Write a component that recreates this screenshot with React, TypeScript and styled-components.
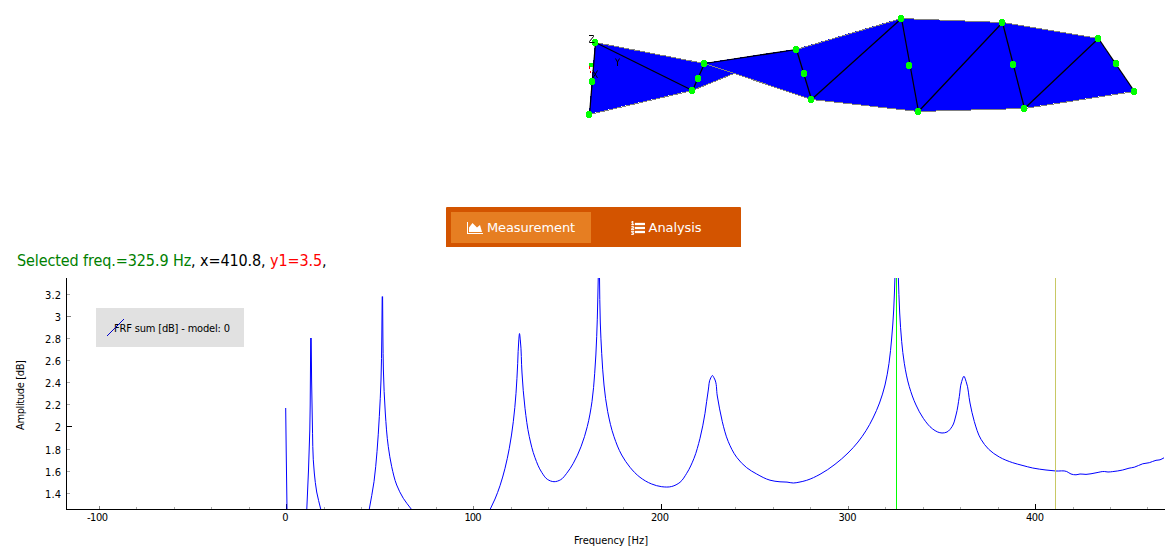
import React from 'react';
import styled, { createGlobalStyle } from 'styled-components';

const GlobalStyle = createGlobalStyle`
  body { margin: 0; background: #fff; overflow: hidden; }
`;

const UI_FONT = "'DejaVu Sans Condensed', 'DejaVu Sans', sans-serif";

const Page = styled.main`
  display: flex;
  flex-direction: column;
  width: 1166px;
  height: 557px;
  background: #fff;
  color: #000;
  font-family: ${UI_FONT};
  font-stretch: condensed;
`;

const ModelView = styled.svg`
  display: block;
  flex: none;
  width: 1166px;
  height: 207px;
`;

const TabBar = styled.nav`
  display: flex;
  flex: none;
  box-sizing: border-box;
  width: 295px;
  height: 40px;
  margin-left: 446px;
  padding: 5px 5px 4px;
  gap: 5px;
  border-radius: 1px 1px 0 0;
  background: #d35400;
`;

const Tab = styled.button<{ $active?: boolean }>`
  display: flex;
  flex: 1;
  align-items: center;
  justify-content: center;
  gap: 4px;
  padding: 0;
  border: 0;
  background: ${(p) => (p.$active ? '#e67e22' : 'transparent')};
  color: #fff;
  font: 13px/16px 'DejaVu Sans', sans-serif;
  letter-spacing: -0.1px;
`;

const TabIcon = styled.svg<{ $width: number }>`
  flex: none;
  width: ${(p) => p.$width}px;
  height: 14px;
  fill: currentColor;
`;

const Readout = styled.div`
  flex: none;
  height: 31px;
  padding-left: 17px;
  font-size: 16px;
  line-height: 27px;
  letter-spacing: -0.1px;
  white-space: pre;
`;

const Value = styled.span<{ $color: string }>`
  color: ${(p) => p.$color};
`;

const Plot = styled.svg`
  display: block;
  flex: none;
  width: 1166px;
  height: 279px;
  font-family: ${UI_FONT};
  font-stretch: condensed;
  font-size: 11px;
`;

type Pt = [number, number];

const nodes: Record<string, Pt> = {
  a: [595, 42], b: [589, 114], c: [704, 63], d: [692, 90],
  e: [796, 49], f: [811, 99], g: [901, 18], h: [918, 111],
  i: [1002, 22], j: [1024, 108], k: [1098, 38], l: [1134, 91],
};
const midNodes: Pt[] = [[592, 81], [698, 78], [804, 73], [909, 65], [1013, 64], [1116, 63]];
const darkEdges = ['ab', 'ad', 'dc', 'ce', 'ef', 'fg', 'gh', 'hi', 'ij', 'jk', 'kl'];
const greyEdges = ['ac', 'bd', 'cf', 'eg', 'gi', 'ik', 'lj', 'jh', 'hf'];

const Edge = ({ id, color, width = 1 }: { id: string; color: string; width?: number }) => {
  const [p, q] = [nodes[id[0]], nodes[id[1]]];
  return (
    <line x1={p[0] + 0.5} y1={p[1] + 0.5} x2={q[0] + 0.5} y2={q[1] + 0.5} stroke={color} strokeWidth={width} />
  );
};

const Model = () => (
  <ModelView viewBox="0 0 1166 207">
    <g shapeRendering="crispEdges">
      <path
        fill="#00f"
        d="M595 42L704 63L796 49L901 18L1002 22L1098 38L1134 91L1024 108L918 111L811 99L734 73.5L692 90L589 114Z"
      />
      {greyEdges.map((id) => <Edge key={id} id={id} color="#808080" />)}
      <line x1="692.5" y1="90.5" x2="734" y2="73.5" stroke="#808080" />
    </g>
    {darkEdges.map((id) => <Edge key={id} id={id} color="#000" width={1.25} />)}
    <g shapeRendering="crispEdges">
      {[...Object.values(nodes), ...midNodes].map(([x, y]) => (
        <path key={`${x}-${y}`} fill="#0f0" d={`M${x - 3} ${y - 2}h1v-1h4v1h1v5h-1v1h-4v-1h-1z`} />
      ))}
      <rect x="589" y="63" width="4" height="4" fill="#0f0" />
      <path stroke="red" d="M589.5 66v3M590.5 71v2" />
    </g>
    <path
      stroke="#000"
      fill="none"
      d="M589 35.5h4.5v1L589.5 41.5v1h5M593 70.5L597.5 78M597.5 70.5L593 78M615.5 58.5L617.5 62V66M619.5 58.5L617.5 62"
    />
  </ModelView>
);

const response: Pt[][] = [
  [[285.7, 408], [286.2, 450], [287, 509]],
  [[306.8, 509], [308.5, 470], [309.8, 430], [310.4, 380], [310.7, 338]],
  [[311.2, 338], [311.6, 380], [312.3, 420], [314.3, 473], [316.7, 492], [320.7, 509]],
  [[369.3, 509], [374, 481.7], [377, 451.7], [379.3, 416.7], [381, 380], [381.8, 337], [382.2, 296.5]],
  [[382.6, 296.5], [382.9, 337], [383.4, 370], [385.3, 413], [388.3, 446.7], [391.7, 466.7], [396.7, 485], [403.3, 498.3], [411.2, 509]],
  [[490.3, 509], [495, 499], [500, 485.7], [505, 468.3], [509.3, 448.3], [513.3, 421.7], [516, 393.3], [517.7, 363.3], [518.8, 340], [519.5, 333.5], [520.3, 340], [522, 373], [525, 408.3], [529.3, 436.7], [535, 457.7], [541.7, 472.3], [547.3, 479.3], [554, 481.7], [560.7, 479.7], [566.7, 473.3], [573.3, 463.3], [581, 446.7], [587.3, 426.5], [592, 401.5], [594.7, 373.3], [596.7, 336.7], [597.7, 303], [598.3, 276]],
  [[599.5, 276], [600.3, 323], [601.7, 353.3], [604, 385], [607.7, 411.7], [614, 436.7], [621.7, 455], [630, 467.3], [640, 477.3], [651.7, 484], [661.7, 486.7], [671.7, 486.5], [680, 482.3], [686.7, 473.3], [694, 458.3], [700, 438.3], [705, 413.3], [708.3, 390], [710.7, 378], [712.4, 375.5], [714.1, 378], [717.3, 396], [722.3, 421.7], [728.3, 441.7], [736.7, 457.3], [746.7, 467.7], [756.7, 474], [770, 480.2], [780, 481.8], [787, 482.1], [793.3, 483], [799, 482.2], [806.7, 480.3], [820, 474.3], [835, 464.3], [848, 453], [858, 442], [866, 430.7], [873, 418], [879.5, 403], [885, 385], [889, 363.3], [891.7, 338], [893.7, 310], [895, 276]],
  [[898.3, 276], [899.7, 313], [901.7, 341.7], [904.3, 363.3], [909.3, 386.7], [916, 405], [923.3, 418.3], [932.7, 429], [937.7, 432], [942, 433], [947, 432], [952, 426.7], [956, 415], [959.3, 396.7], [961.7, 381.5], [963.9, 376.2], [966.1, 381.5], [970, 403], [974.3, 421.5], [981, 439.3], [988.7, 449.3], [999.3, 457], [1012.7, 462.7], [1022, 465.3], [1032.7, 468], [1046, 470], [1056, 471], [1066.7, 471.5], [1071, 474], [1076, 474.8], [1080, 474], [1086, 474.4], [1096, 472.8], [1104.3, 471.5], [1108, 472], [1112.7, 471.6], [1122.7, 470], [1129, 468.2], [1134.3, 467.2], [1142.7, 463.8], [1149.3, 462.7], [1156, 460.3], [1160, 459.8], [1164, 457.8]],
];

const dist = (a: Pt, b: Pt) => Math.hypot(b[0] - a[0], b[1] - a[1]);

// Derivative at b of the parabola through a, b and c, parametrised by chord length.
const tangent = (a: Pt, b: Pt, c: Pt): Pt => {
  const [s, t] = [dist(a, b), dist(b, c)];
  if (s === 0 || t === 0) return [(c[0] - a[0]) / (s + t), (c[1] - a[1]) / (s + t)];
  const axis = (k: 0 | 1) => ((t * (b[k] - a[k])) / s + (s * (c[k] - b[k])) / t) / (s + t);
  return [axis(0), axis(1)];
};

const smooth = (pts: Pt[]) =>
  pts.slice(1).reduce((d, p, n) => {
    const from = pts[n];
    const m1 = tangent(pts[Math.max(n - 1, 0)], from, p);
    const m2 = tangent(from, p, pts[Math.min(n + 2, pts.length - 1)]);
    const h = dist(from, p) / 3;
    return `${d}C${from[0] + m1[0] * h} ${from[1] + m1[1] * h} ${p[0] - m2[0] * h} ${p[1] - m2[1] * h} ${p[0]} ${p[1]}`;
  }, `M${pts[0][0]} ${pts[0][1]}`);

const yTicks: [string, number][] = [
  ['3.2', 294], ['3', 316], ['2.8', 338], ['2.6', 360], ['2.4', 382],
  ['2.2', 404], ['2', 426], ['1.8', 449], ['1.6', 471], ['1.4', 493],
];
const xLabels: [string, number, number][] = [
  ['-100', 97.5, 21], ['0', 285.5, 6], ['100', 473, 17], ['200', 660, 18], ['300', 847.5, 18], ['400', 1035, 18],
];
const xTicks = Array.from({ length: 29 }, (_, n) => ({ n, x: Math.floor(99.3 + n * 37.45) }));

const Chart = () => (
  <Plot viewBox="0 278 1166 279">
    <clipPath id="area"><rect x="67" y="278" width="1098" height="231" /></clipPath>
    <g shapeRendering="crispEdges">
      {yTicks.map(([t, y]) => (
        <rect key={t} x="67" y={y} height="1" width={t === '2' ? 5 : t === '3' ? 4 : 3}
          fill={t === '2' ? '#000' : t === '3' ? '#808080' : '#aaa'} />
      ))}
      {xTicks.map(({ n, x }) => {
        const h = n % 10 === 5 ? 5 : n % 5 === 0 ? 3 : 2;
        return <rect key={n} x={x} y={509 - h} width="1" height={h} fill={h === 5 ? '#000' : h === 3 ? '#808080' : '#aaa'} />;
      })}
      <rect x="66" y="278" width="1" height="232" />
      <rect x="66" y="509" width="1099" height="1" />
    </g>
    <g clipPath="url(#area)" fill="none" stroke="#00f">
      {response.map((pts, n) => <path key={n} d={smooth(pts)} />)}
    </g>
    <g shapeRendering="crispEdges">
      <rect x="896" y="278" width="1" height="231" fill="#0f0" />
      <rect x="1055" y="278" width="1" height="231" fill="#c8c864" />
      <rect x="96" y="308" width="148" height="39" fill="#e1e1e1" />
    </g>
    {yTicks.map(([t, y]) => (
      <text key={t} x="61" y={y + 5} textAnchor="end" textLength={t.length > 1 ? 16 : 6}>{t}</text>
    ))}
    {xLabels.map(([t, x, w]) => (
      <text key={t} x={x} y="521" textAnchor="middle" textLength={w}>{t}</text>
    ))}
    <text x="114" y="332" textLength="116">FRF sum [dB] - model: 0</text>
    <path stroke="#0000c8" d="M107 336L124 319" />
    <text x="574" y="544" textLength="74">Frequency [Hz]</text>
    <text transform="translate(24 430) rotate(-90)" textLength="70">Amplitude [dB]</text>
  </Plot>
);

export default function App() {
  return (
    <Page>
      <GlobalStyle />
      <Model />
      <TabBar>
        <Tab $active>
          <TabIcon $width={16} viewBox="0 0 2048 1792">
            <path d="M2048 1536v128h-2048v-1536h128v1408h1920zM1664 512l256 896h-1664v-576l448-576 576 576z" />
          </TabIcon>
          Measurement
        </Tab>
        <Tab>
          <TabIcon $width={14} viewBox="0 0 1792 1792" stroke="currentColor" strokeWidth="40">
            <path d="M381 1620q0 80-54.5 126t-135.5 46q-106 0-172-66l57-88q49 45 106 45 29 0 50.5-14.5t21.5-42.5q0-64-105-56l-26-56q8-10 32.5-43.5t42.5-54 37-38.5v-1q-16 0-48.5 1t-48.5 1v53h-106v-152h333v88l-95 115q51 12 81 49t30 88zm2-627v159h-362q-6-36-6-54 0-51 23.5-93t56.5-68 66-47.5 56.5-43.5 23.5-45q0-25-14.5-38.5t-39.5-13.5q-46 0-81 58l-85-59q24-51 71.5-79.5t105.5-28.5q73 0 123 41.5t50 112.5q0 50-34 91.5t-75 64.5-75.5 50.5-35.5 52.5h127v-60h105zm1409 319v192q0 13-9.5 22.5t-22.5 9.5h-1216q-13 0-22.5-9.5t-9.5-22.5v-192q0-14 9-23t23-9h1216q13 0 22.5 9.5t9.5 22.5zm-1408-899v99h-335v-99h107q0-41 .5-121.5t.5-121.5v-12h-2q-8 17-50 54l-71-76 136-127h106v404h108zm1408 387v192q0 13-9.5 22.5t-22.5 9.5h-1216q-13 0-22.5-9.5t-9.5-22.5v-192q0-14 9-23t23-9h1216q13 0 22.5 9.5t9.5 22.5zm0-512v192q0 13-9.5 22.5t-22.5 9.5h-1216q-13 0-22.5-9.5t-9.5-22.5v-192q0-13 9.5-22.5t22.5-9.5h1216q13 0 22.5 9.5t9.5 22.5z" />
          </TabIcon>
          Analysis
        </Tab>
      </TabBar>
      <Readout>
        <Value $color="#008000">Selected freq.=325.9 Hz</Value>, x=410.8, <Value $color="#f00">y1=3.5</Value>,
      </Readout>
      <Chart />
    </Page>
  );
}
